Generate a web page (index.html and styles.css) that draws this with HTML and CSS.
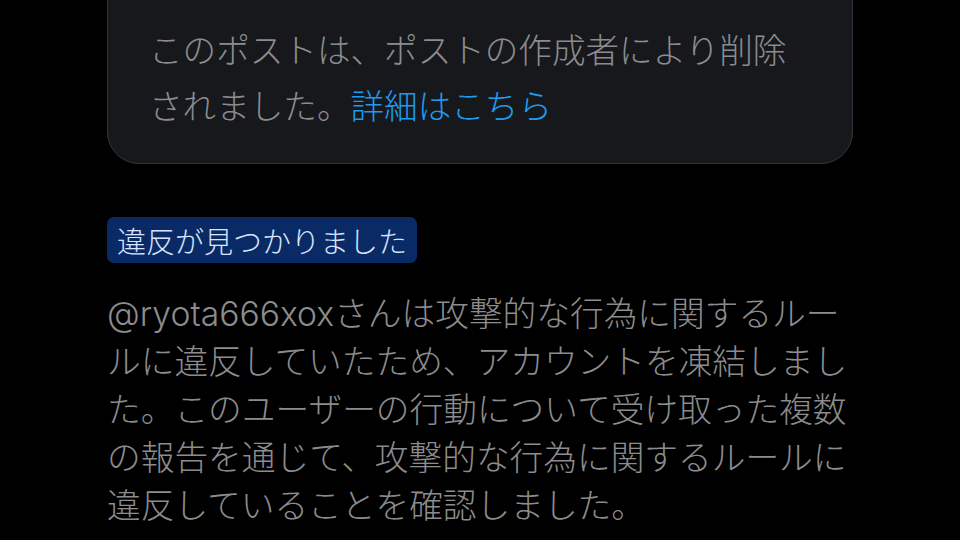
FILE: index.html
```html
<!DOCTYPE html>
<html lang="ja">
<head>
    <meta charset="UTF-8">
    <meta name="viewport" content="width=device-width, initial-scale=1.0">
    <title>違反が見つかりました</title>
    <link rel="stylesheet" href="styles.css">
</head>
<body>
    <div class="column">
        <div class="deleted-card">
            <p>このポストは、ポストの作成者により削除されました。<a href="#">詳細はこちら</a></p>
        </div>
        <span class="violation-badge">違反が見つかりました</span>
        <p class="notice">@ryota666xoxさんは攻撃的な行為に関するルールに違反していたため、アカウントを凍結しました。このユーザーの行動について受け取った複数の報告を通じて、攻撃的な行為に関するルールに違反していることを確認しました。</p>
    </div>
</body>
</html>
```

FILE: styles.css
```css
body {
    margin: 0;
    background-color: #000;
    font-family: "Noto Sans CJK JP", "Noto Sans", sans-serif;
    font-weight: 300;
    overflow: hidden;
    height: 540px;
}
.column {
    width: 746px;
    margin: 0 auto;
    display: flex;
    flex-direction: column;
    align-items: flex-start;
}
.deleted-card {
    box-sizing: border-box;
    width: 100%;
    margin-top: -32px;
    padding: 52px 41px 30px;
    background-color: #17181b;
    border: 1px solid #34363a;
    border-radius: 32px;
}
.deleted-card p {
    margin: 0;
    font-size: 33.6px;
    line-height: 56px;
    color: #8a8c90;
}
.deleted-card a {
    color: #1d9bf0;
    text-decoration: none;
}
.violation-badge {
    margin-top: 53px;
    padding: 0 10px;
    height: 46px;
    line-height: 46px;
    font-size: 29px;
    color: #d6e4ff;
    background-color: #0a2a66;
    border-radius: 7px;
}
.notice {
    margin: 27px 0 0;
    font-family: Inter, "Noto Sans CJK JP", sans-serif;
    font-size: 33.7px;
    line-height: 48px;
    color: #8c8c8e;
}
```
